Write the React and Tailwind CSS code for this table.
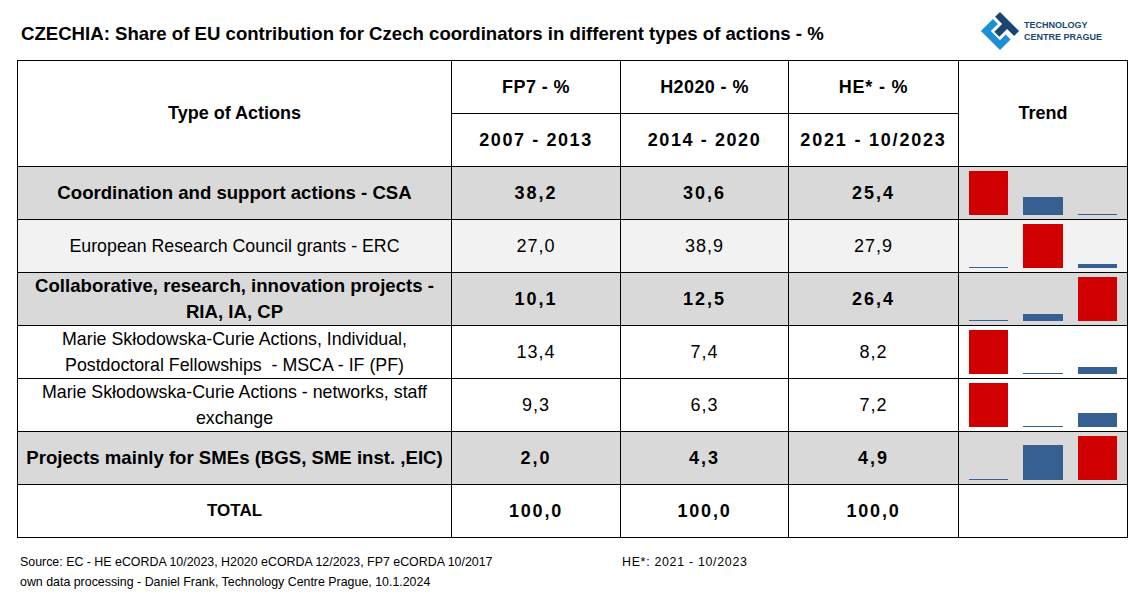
import React from "react";

const rows = [
  { label: ["Coordination and support actions - CSA"], v: [38.2, 30.6, 25.4], bold: true, bg: "bg-[#d9d9d9]" },
  { label: ["European Research Council grants - ERC"], v: [27.0, 38.9, 27.9], bold: false, bg: "bg-[#f2f2f2]" },
  { label: ["Collaborative, research, innovation projects -", "RIA, IA, CP"], v: [10.1, 12.5, 26.4], bold: true, bg: "bg-[#d9d9d9]" },
  { label: ["Marie Skłodowska-Curie Actions, Individual,", "Postdoctoral Fellowships  - MSCA - IF (PF)"], v: [13.4, 7.4, 8.2], bold: false, bg: "bg-white" },
  { label: ["Marie Skłodowska-Curie Actions - networks, staff", "exchange"], v: [9.3, 6.3, 7.2], bold: false, bg: "bg-white" },
  { label: ["Projects mainly for SMEs (BGS, SME inst. ,EIC)"], v: [2.0, 4.3, 4.9], bold: true, bg: "bg-[#d9d9d9]" },
];

const fmt = (n) => n.toFixed(1).replace(".", ",");

function Trend({ v }) {
  const max = Math.max(...v);
  const min = Math.min(...v);
  return (
    <div className="flex items-end h-full pl-[10px] pr-[10px] pb-[4px] gap-[15px]">
      {v.map((x, i) => {
        const h = 1 + ((x - min) / (max - min)) * 43;
        return (
          <div
            key={i}
            className={(x === max ? "bg-[#d00000]" : "bg-[#376092]") + (i === 1 ? " w-[40px]" : " w-[39px]")}
            style={{ height: h + "px" }}
          />
        );
      })}
    </div>
  );
}

function Logo() {
  return (
    <div className="flex items-center gap-[4px]">
      <svg width="40" height="40" viewBox="0 0 40 40">
        <g transform="rotate(45 20 20) translate(6.5 6.5)">
          <path d="M0 10 H7 V20 H20 V12 H27 V27 H0 Z" fill="#1d8fd8" />
          <path d="M0 0 H27 V7 H17 V18 H10 V7 H0 Z" fill="#1b4673" />
        </g>
      </svg>
      <div className="flex flex-col text-[#1b4673] font-bold text-[9px] leading-[12px]" style={{ fontFamily: '"Liberation Sans", Arial, sans-serif' }}>
        <span>TECHNOLOGY</span>
        <span>CENTRE PRAGUE</span>
      </div>
    </div>
  );
}

export default function App() {
  return (
    <div className="w-[1147px] h-[601px] bg-white text-black relative" style={{ fontFamily: '"Liberation Sans", Arial, sans-serif' }}>
      <div className="flex items-start justify-between h-[60px] pl-[21px] pr-[45px]">
        <div className="pt-[23px] text-[18.6px] font-bold leading-[22px]">
          CZECHIA: Share of EU contribution for Czech coordinators in different types of actions - %
        </div>
        <div className="pt-[11px]">
          <Logo />
        </div>
      </div>

      <div className="ml-[17px] w-[1111px] border border-black bg-black grid gap-px grid-cols-[433px_168px_167px_169px_168px]">
        <div className="row-span-2 bg-white flex items-center justify-center font-bold text-[18px]">Type of Actions</div>
        <div className="h-[52px] bg-white flex items-center justify-center font-bold text-[18px] tracking-[0.4px]">FP7 - %</div>
        <div className="h-[52px] bg-white flex items-center justify-center font-bold text-[18px] tracking-[0.4px]">H2020 - %</div>
        <div className="h-[52px] bg-white flex items-center justify-center font-bold text-[18px] tracking-[0.8px]">HE* - %</div>
        <div className="row-span-2 bg-white flex items-center justify-center font-bold text-[18px]">Trend</div>
        <div className="h-[52px] bg-white flex items-center justify-center font-bold text-[18px] tracking-[1.6px]">2007 - 2013</div>
        <div className="h-[52px] bg-white flex items-center justify-center font-bold text-[18px] tracking-[1.6px]">2014 - 2020</div>
        <div className="h-[52px] bg-white flex items-center justify-center font-bold text-[18px] tracking-[1.8px]">2021 - 10/2023</div>

        {rows.map((r, i) => (
          <React.Fragment key={i}>
            <div className={`h-[52px] ${r.bg} flex flex-col items-center justify-center text-center leading-[26px] ${r.bold ? "font-bold text-[18.6px]" : "text-[17.8px]"}`}>
              {r.label.map((l, j) => (
                <span key={j} className="whitespace-pre">{l}</span>
              ))}
            </div>
            {r.v.map((x, j) => (
              <div key={j} className={`h-[52px] ${r.bg} flex items-center justify-center text-[18px] ${r.bold ? "font-bold tracking-[2px]" : "tracking-[1px]"}`}>
                {fmt(x)}
              </div>
            ))}
            <div className={`h-[52px] ${r.bg}`}>
              <Trend v={r.v} />
            </div>
          </React.Fragment>
        ))}

        <div className="h-[52px] bg-white flex items-center justify-center font-bold text-[17px]">TOTAL</div>
        <div className="h-[52px] bg-white flex items-center justify-center font-bold text-[18px] tracking-[1.8px]">100,0</div>
        <div className="h-[52px] bg-white flex items-center justify-center font-bold text-[18px] tracking-[1.8px]">100,0</div>
        <div className="h-[52px] bg-white flex items-center justify-center font-bold text-[18px] tracking-[1.8px]">100,0</div>
        <div className="h-[52px] bg-white"></div>
      </div>

      <div className="flex pl-[20px] pt-[14px] text-[12.4px] leading-[20px]">
        <div className="w-[602px] flex flex-col">
          <span>Source: EC - HE eCORDA 10/2023, H2020 eCORDA 12/2023, FP7 eCORDA 10/2017</span>
          <span>own data processing - Daniel Frank, Technology Centre Prague, 10.1.2024</span>
        </div>
        <div className="tracking-[0.7px]">HE*: 2021 - 10/2023</div>
      </div>
    </div>
  );
}
